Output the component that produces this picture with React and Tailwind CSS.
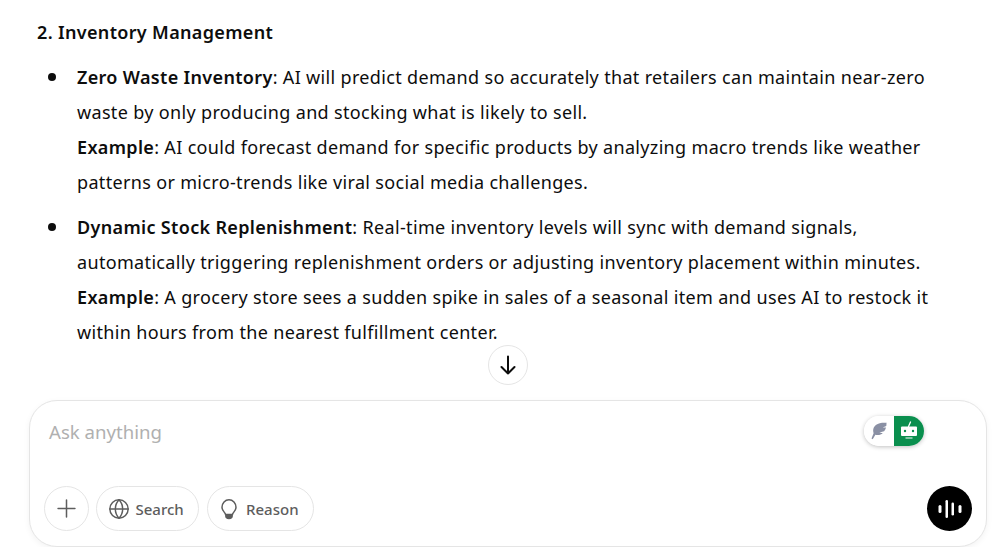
import React from "react";
import { Plus, Globe } from "lucide-react";

const items = [
  {
    title: "Zero Waste Inventory",
    body: ": AI will predict demand so accurately that retailers can maintain near-zero waste by only producing and stocking what is likely to sell.",
    example: ": AI could forecast demand for specific products by analyzing macro trends like weather patterns or micro-trends like viral social media challenges.",
  },
  {
    title: "Dynamic Stock Replenishment",
    body: ": Real-time inventory levels will sync with demand signals, automatically triggering replenishment orders or adjusting inventory placement within minutes.",
    example: ": A grocery store sees a sudden spike in sales of a seasonal item and uses AI to restock it within hours from the nearest fulfillment center.",
  },
];

const FeatherIcon = () => (
  <svg width="18" height="18" viewBox="0 0 18 18" fill="#8a90a4">
    <path d="M16.500 .8c-4-.3-8 .2-10.600 2.200C3.200 5.100 2.600 8.300 3.600 11.300L1.500 16.500l1.200.7 2.700-4.500c2.900.8 5.600.1 7.400-1.500l-3.400-.7 4.700-1.200c1-1.200 1.600-2.500 1.900-3.800l-3.300.1 3.600-1.700c.2-1.500.3-3.200.2-4.600z" />
  </svg>
);

const RobotIcon = () => (
  <svg width="20" height="20" viewBox="0 0 20 20" fill="none">
    <path d="M9.500 5.500 11.500 1" stroke="white" strokeWidth="1.300" strokeLinecap="round" />
    <rect x="2" y="5.500" width="16" height="9.500" rx="1" fill="white" />
    <circle cx="6" cy="10" r="1.200" fill="#0a8f4e" />
    <circle cx="14" cy="10" r="1.200" fill="#0a8f4e" />
    <path d="M6.500 17h7" stroke="white" strokeWidth="1.200" />
  </svg>
);

const VoiceIcon = () => (
  <svg width="24" height="24" viewBox="0 0 24 24" fill="white">
    <rect x="0.500" y="8" width="3" height="8" rx="1.500" />
    <rect x="7.500" y="3" width="2.500" height="18" rx="1.250" />
    <rect x="13.500" y="5.500" width="2.500" height="13" rx="1.250" />
    <rect x="20.500" y="8" width="3" height="8" rx="1.500" />
  </svg>
);

const BulbIcon = () => (
  <svg width="22" height="22" viewBox="0 0 22 22" fill="none" stroke="#5d5d5d" strokeWidth="1.500" strokeLinejoin="round">
    <path d="M7.500 16.500c0-2-3.500-3.300-3.500-7.200C4 5.300 7.100 1.800 11 1.800s7 3.500 7 7.500c0 3.900-3.500 5.200-3.500 7.200z" />
    <path d="M7.800 17.500h6.400c0 1.600-1.200 3-3.200 3s-3.200-1.400-3.200-3z" fill="#5d5d5d" />
  </svg>
);

const ArrowIcon = () => (
  <svg width="16" height="20" viewBox="0 0 16 20" fill="none" stroke="#0d0d0d" strokeWidth="2" strokeLinecap="round" strokeLinejoin="round">
    <path d="M8 1.500v17M1.500 12l6.500 6.500 6.500-6.500" />
  </svg>
);

export default function App() {
  return (
    <div
      className="w-[1000px] h-[547px] overflow-hidden bg-white flex flex-col text-[#0d0d0d] tracking-[0.335px]"
      style={{ fontFamily: '"Noto Sans", "Open Sans", sans-serif' }}
    >
      <div className="relative h-[400px] pl-[37px] pr-[60px] pt-[15px] shrink-0">
        <h3 className="text-[18px] leading-[35px] font-semibold">2. Inventory Management</h3>
        <ul className="mt-[10px] flex flex-col gap-[10px]">
          {items.map((item) => (
            <li key={item.title} className="flex pl-[11px] text-[18px] leading-[35px]">
              <span className="w-[8px] h-[8px] mt-[13px] mr-[21px] rounded-full bg-[#0d0d0d] shrink-0" />
              <div>
                <strong className="font-semibold">{item.title}</strong>
                {item.body}
                <br />
                <strong className="font-semibold">Example</strong>
                {item.example}
              </div>
            </li>
          ))}
        </ul>
        <button className="absolute left-[488px] top-[345px] w-[40px] h-[40px] rounded-full bg-white border border-[#e5e5e5] flex items-center justify-center">
          <ArrowIcon />
        </button>
      </div>

      <div className="ml-[29px] w-[958px] h-[147px] rounded-[28px] border border-[#e5e5e5] shadow-[0_2px_6px_rgba(0,0,0,0.05)] bg-white px-[14px] pt-[15px] pb-[15px] flex flex-col justify-between">
        <div className="flex justify-between items-start">
          <div className="pl-[5px] text-[18.6px] leading-[32px] tracking-normal text-[#b0b0b0]">Ask anything</div>
          <div className="mr-[48px] h-[30px] w-[60px] rounded-full shadow-[0_1px_4px_rgba(0,0,0,0.25)] overflow-hidden flex">
            <div className="w-[30px] flex items-center justify-center bg-white"><FeatherIcon /></div>
            <div className="w-[30px] flex items-center justify-center bg-[#0a8f4e]"><RobotIcon /></div>
          </div>
        </div>
        <div className="flex justify-between items-center">
          <div className="flex gap-[7px] items-center tracking-normal">
            <button className="w-[45px] h-[45px] rounded-full border border-[#e5e5e5] flex items-center justify-center text-[#5d5d5d]">
              <Plus size={29} strokeWidth={1.250} />
            </button>
            <button className="h-[45px] w-[103px] rounded-full border border-[#e5e5e5] flex items-center pl-[11px] gap-[5.5px] text-[#5d5d5d]">
              <Globe size={22} strokeWidth={1.600} />
              <span className="text-[15px] font-medium pt-[1px]">Search</span>
            </button>
            <button className="ml-[1px] h-[45px] w-[107px] rounded-full border border-[#e5e5e5] flex items-center pl-[10px] gap-[6px] text-[#5d5d5d]">
              <BulbIcon />
              <span className="text-[15px] font-medium pt-[1px]">Reason</span>
            </button>
          </div>
          <button className="w-[45px] h-[45px] rounded-full bg-black flex items-center justify-center">
            <VoiceIcon />
          </button>
        </div>
      </div>
    </div>
  );
}
